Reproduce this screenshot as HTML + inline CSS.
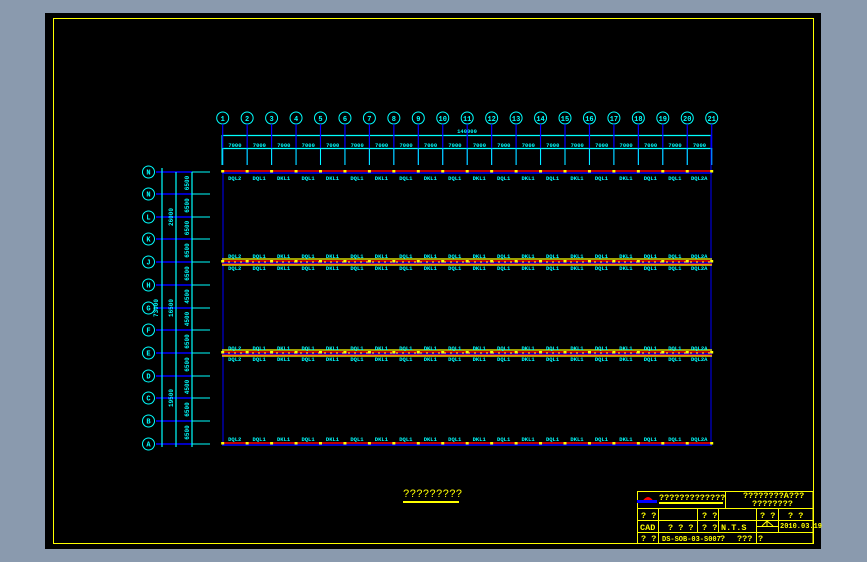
<!DOCTYPE html>
<html><head><meta charset="utf-8"><style>
html,body{margin:0;padding:0;background:#8a9aae;width:867px;height:562px;overflow:hidden}
svg{display:block}
text{font-family:"Liberation Mono",monospace}
</style></head><body>
<svg id="s" width="867" height="562" xmlns="http://www.w3.org/2000/svg">
<rect x="0" y="0" width="867" height="562" fill="#8a9aae"/>
<rect x="45" y="13" width="776" height="536" fill="#000"/>
<rect x="53.5" y="18.5" width="760" height="525" fill="none" stroke="#ffff00" stroke-width="1"/>
<g id="g"></g>
<text x="403" y="497" fill="#ffff00" font-size="11">?????????</text>
<rect x="403" y="501" width="56" height="2" fill="#ffff00"/>
<g stroke="#ffff00" stroke-width="1" fill="none">
<rect x="637.5" y="491.5" width="175.5" height="52"/>
<line x1="637" y1="508.5" x2="813" y2="508.5"/>
<line x1="637" y1="520.5" x2="813" y2="520.5"/>
<line x1="637" y1="532.5" x2="813" y2="532.5"/>
<line x1="725.5" y1="491" x2="725.5" y2="508"/>
<line x1="658.5" y1="508" x2="658.5" y2="543"/>
<line x1="697.5" y1="508" x2="697.5" y2="532"/>
<line x1="718.5" y1="508" x2="718.5" y2="532"/>
<line x1="756.5" y1="508" x2="756.5" y2="543"/>
<line x1="778.5" y1="508" x2="778.5" y2="532"/>
<line x1="756" y1="526.5" x2="778" y2="526.5"/>
<line x1="762" y1="526" x2="767" y2="521"/><line x1="767" y1="521" x2="773" y2="526"/><line x1="767" y1="521" x2="767" y2="526"/>
</g>
<path d="M642 502 Q648 492 654 502 Z" fill="#ff0000"/>
<rect x="637" y="500" width="20" height="3" fill="#0000ff"/>
<text x="659" y="500" fill="#ffff00" font-size="8.5" font-weight="bold">?????????????</text>
<rect x="659" y="502" width="64" height="2" fill="#ffff00"/>
<text x="743" y="498" fill="#ffff00" font-size="8.5" font-weight="bold">????????A???</text>
<text x="752" y="506" fill="#ffff00" font-size="8.5" font-weight="bold">????????</text>
<g fill="#ffff00" font-size="8.5" font-weight="bold">
<text x="641" y="518">? ?</text><text x="702" y="518">? ?</text><text x="760" y="518">? ?</text><text x="788" y="518">? ?</text>
<text x="640" y="530">CAD</text><text x="668" y="530">? ? ?</text><text x="702" y="530">? ?</text><text x="721" y="530">N.T.S</text><text x="780" y="528" font-size="7">2010.03.19</text>
<text x="641" y="541">? ?</text><text x="662" y="541" font-size="7">DS-SOB-03-S007</text><text x="720" y="541">?</text><text x="737" y="541">???</text><text x="758" y="541">?</text>
</g>
</svg>
<script>
var g=document.getElementById('g'),h='';
var C='#00ffff',B='#0000ff';
function L(x1,y1,x2,y2,c,w,d){h+='<line x1="'+x1+'" y1="'+y1+'" x2="'+x2+'" y2="'+y2+'" stroke="'+c+'" stroke-width="'+(w||1)+'"'+(d?' stroke-dasharray="'+d+'"':'')+'/>';}
function T(x,y,t,s,c,r){h+='<text x="'+x+'" y="'+y+'" fill="'+(c||C)+'" font-size="'+(s||6)+'" font-weight="bold"'+(r?' transform="rotate(-90 '+x+' '+y+')"':'')+' text-anchor="middle">'+t+'</text>';}
var x0=222.7,dx=24.45;
var rows=[172,194,217,239,262,285,308,330,353,376,398,421,444];
var rl=['N','N','L','K','J','H','G','F','E','D','C','B','A'];
L(222,135.5,712,135.5,C,1.2);L(222,148.5,712,148.5,C,1.2);L(222,135,222,165,C,1);
T(467,133,'140000',5.5);
for(var i=0;i<21;i++){var x=x0+i*dx;
 h+='<circle cx="'+x+'" cy="118" r="6" fill="none" stroke="'+C+'" stroke-width="1"/>';T(x,121,i+1,7);
 L(x,124,x,165,B,1.2);L(x,148,x,165,C,1);
 if(i<20)T(x+dx/2,147,'7000',5.5);
}
L(223,172,223,444,B,1);L(711,135,711,444,B,1);
function beam(y,thick){L(222,y-1,712,y-1,'#ff0000',1.5);L(222,y+1,712,y+1,B,1.5);
 if(thick){L(222,y-3,712,y-3,'#ffff00',1.2);L(222,y+3,712,y+3,'#ffff00',1.2);L(222,y,712,y,'#ffff00',1,'2,4');L(222,y+2,712,y+2,'#ff0000',1);}
 for(var i=0;i<21;i++)h+='<rect x="'+(x0+i*dx-1.5)+'" y="'+(y-2)+'" width="3" height="2.5" fill="#ffff00"/>';}
beam(172,0);beam(262,1);beam(353,1);beam(444,0);
var labs=['DQL2','DQL1','DKL1','DQL1','DKL1','DQL1','DKL1','DQL1','DKL1','DQL1','DKL1','DQL1','DKL1','DQL1','DKL1','DQL1','DKL1','DQL1','DQL1','DQL2A'];
for(var i=0;i<20;i++){var x=x0+i*dx+12;T(x,180,labs[i],5.5);T(x,258,labs[i],5.5);T(x,270,labs[i],5.5);T(x,350,labs[i],5.5);T(x,361,labs[i],5.5);T(x,441,labs[i],5.5);}
for(var j=0;j<13;j++){var y=rows[j];h+='<circle cx="148.5" cy="'+y+'" r="6" fill="none" stroke="'+C+'" stroke-width="1"/>';T(148.5,y+2.5,rl[j],7);
 L(156,y,192,y,B,1.4);L(192,y,210,y,C,1);}
L(162,168,162,447,C,1.2);L(176,172,176,447,C,1.2);L(192,172,192,447,C,1.2);
var dims=['6500','6500','6500','6500','6500','4500','4500','6500','6500','4500','6500','6500'];
for(var j=0;j<12;j++){T(189,(rows[j]+rows[j+1])/2,dims[j],6,C,1);}
T(173,217,'26000',6,C,1);T(173,308,'16500',6,C,1);T(158,308,'73000',6,C,1);T(173,398,'19500',6,C,1);
g.innerHTML=h;
</script>
</body></html>
